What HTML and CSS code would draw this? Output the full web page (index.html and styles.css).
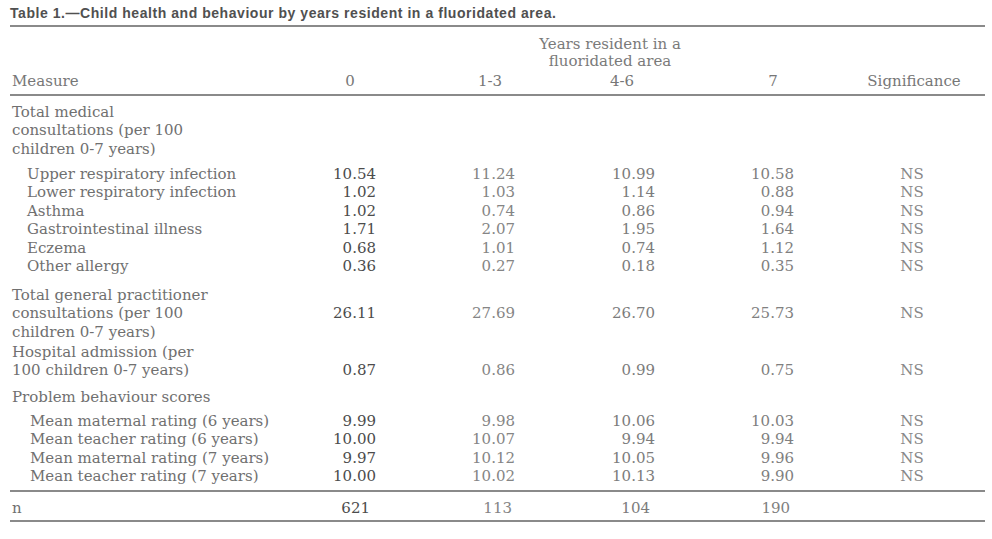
FILE: index.html
```html
<!DOCTYPE html>
<html lang="en">
<head>
<meta charset="utf-8">
<title>Table 1</title>
<link rel="stylesheet" href="styles.css">
</head>
<body>
<div class="page">
  <h1 class="caption">Table 1.—Child health and behaviour by years resident in a fluoridated area.</h1>
  <table class="data">
    <colgroup>
      <col class="w-label"><col class="w-c0"><col class="w-c1"><col class="w-c2"><col class="w-c3"><col class="w-sig">
    </colgroup>
    <thead>
      <tr class="span-row">
        <th></th><th></th>
        <th colspan="3" class="spanner">Years resident in a<br>fluoridated area</th>
        <th></th>
      </tr>
      <tr class="head-row">
        <th class="label">Measure</th>
        <th class="h0">0</th>
        <th class="h1">1-3</th>
        <th class="h2">4-6</th>
        <th class="h3">7</th>
        <th class="hs">Significance</th>
      </tr>
    </thead>
    <tbody>
      <tr class="g-first">
        <td class="label">Total medical<br>consultations (per 100<br>children 0-7 years)</td>
        <td></td><td></td><td></td><td></td><td></td>
      </tr>
      <tr class="g-sub-first">
        <td class="label sub">Upper respiratory infection</td>
        <td class="n0">10.54</td><td class="n1">11.24</td><td class="n2">10.99</td><td class="n3">10.58</td><td class="ns">NS</td>
      </tr>
      <tr>
        <td class="label sub">Lower respiratory infection</td>
        <td class="n0">1.02</td><td class="n1">1.03</td><td class="n2">1.14</td><td class="n3">0.88</td><td class="ns">NS</td>
      </tr>
      <tr>
        <td class="label sub">Asthma</td>
        <td class="n0">1.02</td><td class="n1">0.74</td><td class="n2">0.86</td><td class="n3">0.94</td><td class="ns">NS</td>
      </tr>
      <tr>
        <td class="label sub">Gastrointestinal illness</td>
        <td class="n0">1.71</td><td class="n1">2.07</td><td class="n2">1.95</td><td class="n3">1.64</td><td class="ns">NS</td>
      </tr>
      <tr>
        <td class="label sub">Eczema</td>
        <td class="n0">0.68</td><td class="n1">1.01</td><td class="n2">0.74</td><td class="n3">1.12</td><td class="ns">NS</td>
      </tr>
      <tr>
        <td class="label sub">Other allergy</td>
        <td class="n0">0.36</td><td class="n1">0.27</td><td class="n2">0.18</td><td class="n3">0.35</td><td class="ns">NS</td>
      </tr>
      <tr class="g-gp">
        <td class="label">Total general practitioner<br>consultations (per 100<br>children 0-7 years)</td>
        <td class="n0">26.11</td><td class="n1">27.69</td><td class="n2">26.70</td><td class="n3">25.73</td><td class="ns">NS</td>
      </tr>
      <tr class="g-hosp">
        <td class="label">Hospital admission (per<br>100 children 0-7 years)</td>
        <td class="n0">0.87</td><td class="n1">0.86</td><td class="n2">0.99</td><td class="n3">0.75</td><td class="ns">NS</td>
      </tr>
      <tr class="g-prob">
        <td class="label">Problem behaviour scores</td>
        <td></td><td></td><td></td><td></td><td></td>
      </tr>
      <tr class="g-sub-first2">
        <td class="label sub2">Mean maternal rating (6 years)</td>
        <td class="n0">9.99</td><td class="n1">9.98</td><td class="n2">10.06</td><td class="n3">10.03</td><td class="ns">NS</td>
      </tr>
      <tr>
        <td class="label sub2">Mean teacher rating (6 years)</td>
        <td class="n0">10.00</td><td class="n1">10.07</td><td class="n2">9.94</td><td class="n3">9.94</td><td class="ns">NS</td>
      </tr>
      <tr>
        <td class="label sub2">Mean maternal rating (7 years)</td>
        <td class="n0">9.97</td><td class="n1">10.12</td><td class="n2">10.05</td><td class="n3">9.96</td><td class="ns">NS</td>
      </tr>
      <tr class="g-last">
        <td class="label sub2">Mean teacher rating (7 years)</td>
        <td class="n0">10.00</td><td class="n1">10.02</td><td class="n2">10.13</td><td class="n3">9.90</td><td class="ns">NS</td>
      </tr>
    </tbody>
    <tfoot>
      <tr class="count-row">
        <td class="label">n</td>
        <td class="n0">621</td><td class="n1">113</td><td class="n2">104</td><td class="n3">190</td><td></td>
      </tr>
    </tfoot>
  </table>
</div>
</body>
</html>
```
FILE: styles.css
```css
html, body {
  margin: 0;
  padding: 0;
  background: #ffffff;
}

.page {
  padding: 5px 7px 0 10px;
  width: 975px;
}

.caption {
  margin: 0;
  font-family: "Liberation Sans", Arial, sans-serif;
  font-weight: bold;
  font-size: 14px;
  letter-spacing: 0.55px;
  line-height: 16px;
  color: #505050;
  padding-bottom: 4px;
  border-bottom: 2px solid #8a8a8a;
}

.data {
  width: 975px;
  table-layout: fixed;
  border-collapse: collapse;
  font-family: "DejaVu Serif", "Liberation Serif", serif;
  font-size: 15px;
  line-height: 18.5px;
  color: #707070;
}

.w-label { width: 290px; }
.w-c0 { width: 120px; }
.w-c1 { width: 140px; }
.w-c2 { width: 140px; }
.w-c3 { width: 150px; }
.w-sig { width: 135px; }

.data th, .data td {
  padding: 0;
  font-weight: normal;
  vertical-align: middle;
}

/* header */
.span-row th {
  line-height: 17px;
  padding-top: 9px;
}
.spanner {
  text-align: center;
  padding-right: 50px !important;
  color: #7a7a7a;
}
.head-row th {
  padding-top: 2px;
  padding-bottom: 3px;
  text-align: center;
  color: #777;
}
.head-row .label { text-align: left; }
.h0 { padding-right: 20px !important; }
.h2 { padding-right: 16px !important; }
.h3 { padding-right: 4px !important; }
.hs { padding-right: 7px !important; }

thead tr:last-child th {
  border-bottom: 2px solid #8a8a8a;
}

/* labels */
.label {
  text-align: left;
  padding-left: 2px !important;
}
.label.sub { padding-left: 17px !important; }
.label.sub2 { padding-left: 20px !important; }

/* numbers */
.n0, .n1, .n2, .n3 { text-align: right; }
.n0 { padding-right: 44px !important; color: #4c4c4c; }
.n1 { padding-right: 45px !important; color: #858585; }
.n2 { padding-right: 45px !important; color: #7c7c7c; }
.n3 { padding-right: 56px !important; color: #808080; }
.ns {
  text-align: center;
  padding-right: 11px !important;
  color: #888;
}

/* group spacing */
.g-first td { padding-top: 7px; }
.g-sub-first td { padding-top: 6.5px; }
.g-gp td { padding-top: 10px; }
.g-hosp td { padding-top: 1.5px; vertical-align: bottom; }
.g-prob td { padding-top: 8px; }
.g-sub-first2 td { padding-top: 5.5px; }
.g-last td {
  padding-bottom: 4px;
  border-bottom: 2px solid #8a8a8a;
}

.count-row td {
  padding-top: 7px;
  padding-bottom: 3px;
  border-bottom: 2px solid #8a8a8a;
}
.count-row .n0 { padding-right: 50px !important; }
.count-row .n1 { padding-right: 48px !important; }
.count-row .n2 { padding-right: 50px !important; }
.count-row .n3 { padding-right: 60px !important; }
```
